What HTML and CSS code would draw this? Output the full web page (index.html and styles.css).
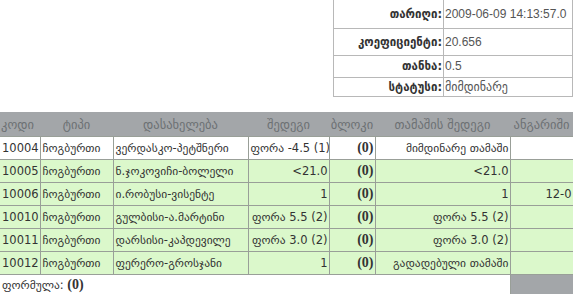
FILE: index.html
```html
<!DOCTYPE html>
<html>
<head>
<meta charset="utf-8">
<link rel="stylesheet" href="styles.css">
</head>
<body>
<div class="top">
  <table class="info">
    <tr class="r1"><th>თარიღი:</th><td>2009-06-09 14:13:57.0</td></tr>
    <tr class="r2"><th>კოეფიციენტი:</th><td>20.656</td></tr>
    <tr class="r3"><th>თანხა:</th><td>0.5</td></tr>
    <tr class="r4"><th>სტატუსი:</th><td>მიმდინარე</td></tr>
  </table>
</div>
<table class="main">
  <colgroup>
    <col class="c1"><col class="c2"><col class="c3"><col class="c4"><col class="c5"><col class="c6"><col class="c7">
  </colgroup>
  <thead>
    <tr><th class="left">კოდი</th><th>ტიპი</th><th>დასახელება</th><th>შედეგი</th><th>ბლოკი</th><th>თამაშის შედეგი</th><th>ანგარიში</th></tr>
  </thead>
  <tbody>
    <tr class="white"><td>10004</td><td>ჩოგბურთი</td><td>ვერდასკო-პეტშნერი</td><td class="num">ფორა -4.5 (1)</td><td class="num"><span class="b">(0)</span></td><td class="num">მიმდინარე თამაში</td><td></td></tr>
    <tr><td>10005</td><td>ჩოგბურთი</td><td>ნ.ჯოკოვიჩი-ბოლელი</td><td class="num">&lt;21.0</td><td class="num"><span class="b">(0)</span></td><td class="num">&lt;21.0</td><td></td></tr>
    <tr><td>10006</td><td>ჩოგბურთი</td><td>ი.რობუსი-ვისენტე</td><td class="num">1</td><td class="num"><span class="b">(0)</span></td><td class="num">1</td><td class="num">12-0</td></tr>
    <tr><td>10010</td><td>ჩოგბურთი</td><td>გულბისი-ა.მარტინი</td><td class="num">ფორა 5.5 (2)</td><td class="num"><span class="b">(0)</span></td><td class="num">ფორა 5.5 (2)</td><td></td></tr>
    <tr><td>10011</td><td>ჩოგბურთი</td><td>დარსისი-კაპდევილე</td><td class="num">ფორა 3.0 (2)</td><td class="num"><span class="b">(0)</span></td><td class="num">ფორა 3.0 (2)</td><td></td></tr>
    <tr><td>10012</td><td>ჩოგბურთი</td><td>ფერერო-გროსჯანი</td><td class="num">1</td><td class="num"><span class="b">(0)</span></td><td class="num">გადადებული თამაში</td><td></td></tr>
  </tbody>
  <tfoot>
    <tr><td colspan="6" class="formula">ფორმულა: <span class="b">(0)</span></td><td class="grey"></td></tr>
  </tfoot>
</table>
</body>
</html>
```
FILE: styles.css
```css
html, body {
  margin: 0;
  padding: 0;
  background: #fff;
}
body {
  width: 573px;
  height: 296px;
  overflow: hidden;
  font-family: "DejaVu Sans", sans-serif;
  font-size: 11.5px;
  color: #333;
}
.top {
  display: flex;
  justify-content: flex-end;
  height: 112px;
}
.info {
  border-collapse: collapse;
  width: 240px;
  height: 96px;
  table-layout: fixed;
}
.info th, .info td {
  border: 1px solid #b8b8b8;
  padding: 0 1px;
  white-space: nowrap;
}
.info tr:first-child th, .info tr:first-child td { border-top: none; }
.info th {
  text-align: right;
  font-weight: bold;
  font-size: 11.5px;
  color: #333;
  width: 107px;
}
.info td {
  text-align: left;
  color: #555;
  font-family: "Liberation Sans", "DejaVu Sans", sans-serif;
  font-size: 12px;
}
.info .r1 { height: 28px; }
.info .r2 { height: 27px; }
.info .r3 { height: 22px; }
.info .r4 { height: 19px; }

.main {
  border-collapse: collapse;
  width: 573px;
  table-layout: fixed;
}
.c1 { width: 40px; }
.c2 { width: 73px; }
.c3 { width: 135px; }
.c4 { width: 81px; }
.c5 { width: 46px; }
.c6 { width: 135px; }
.c7 { width: 63px; }
.main thead th {
  background: #a3a6a9;
  color: #6c7073;
  font-weight: normal;
  height: 24px;
  padding: 0 1px;
  text-align: center;
  white-space: nowrap;
  overflow: hidden;
  font-size: 12.5px;
}
.main thead th.left { text-align: left; padding-left: 1px; }
.main tbody td {
  background: #dbf8cb;
  border: 1px solid #999f98;
  height: 22px;
  padding: 0 2px;
  white-space: nowrap;
  overflow: hidden;
  font-size: 11.5px;
  color: #333;
}
.main tbody td:first-child {
  border-left: none;
  padding-left: 2px;
}
.main tbody tr.white td { background: #fff; }
.main td.num { text-align: right; padding-right: 1px; }
.b {
  font-family: "Liberation Serif", "DejaVu Serif", serif;
  font-weight: bold;
  font-size: 14px;
  color: #333;
}
.main td.formula {
  height: 19px;
  padding: 0 2px;
  border-left: none;
  border-right: 1px solid #999f98;
  font-size: 11.5px;
}
.main td.grey {
  background: #a3a6a9;
}
```
